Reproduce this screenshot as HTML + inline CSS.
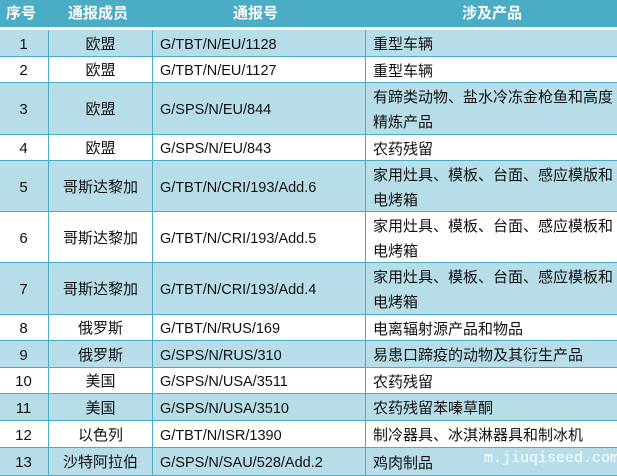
<!DOCTYPE html>
<html><head><meta charset="utf-8"><style>
*{margin:0;padding:0;box-sizing:border-box}
body{width:617px;height:476px;overflow:hidden;background:#fff;font-family:"Liberation Sans","Noto Sans CJK SC",sans-serif;font-size:14px;color:#111;position:relative}
.hd{position:absolute;left:0;top:0;width:617px;height:27px;background:#4BACC6;color:#fff;font-weight:bold;font-size:15px}
.hd div{position:absolute;top:0;line-height:27px}
.r{position:absolute;left:0;width:617px;border-bottom:1px solid #4BACC6}
.b{background:#B7DDE8}
.c{position:absolute;top:0;bottom:0;padding-top:3px;display:flex;align-items:center;line-height:20px}
.c1{left:0;width:47px;justify-content:center;font-size:15px}
.c2{left:48px;width:104px;justify-content:center;border-left:1px solid #4BACC6;font-size:15px}
.c3{left:152px;width:213px;padding-left:7px;border-left:1px solid #4BACC6;font-size:14.5px}
.c4{left:365px;width:252px;padding-left:7px;border-left:1px solid #4BACC6;line-height:25px;font-size:15px}
.wm{position:absolute;right:-2px;top:450px;color:#fff;font-family:"Liberation Mono",monospace;font-size:15px}
</style></head><body>
<div class="hd"><div style="left:6px">序号</div><div style="left:68px">通报成员</div><div style="left:233px">通报号</div><div style="left:462px">涉及产品</div></div>
<div class="r b" style="top:30px;height:27px"><div class="c c1">1</div><div class="c c2">欧盟</div><div class="c c3">G/TBT/N/EU/1128</div><div class="c c4">重型车辆</div></div>
<div class="r" style="top:57px;height:26px"><div class="c c1">2</div><div class="c c2">欧盟</div><div class="c c3">G/TBT/N/EU/1127</div><div class="c c4">重型车辆</div></div>
<div class="r b" style="top:83px;height:52px"><div class="c c1">3</div><div class="c c2">欧盟</div><div class="c c3">G/SPS/N/EU/844</div><div class="c c4">有蹄类动物、盐水冷冻金枪鱼和高度<br>精炼产品</div></div>
<div class="r" style="top:135px;height:26px"><div class="c c1">4</div><div class="c c2">欧盟</div><div class="c c3">G/SPS/N/EU/843</div><div class="c c4">农药残留</div></div>
<div class="r b" style="top:161px;height:51px"><div class="c c1">5</div><div class="c c2">哥斯达黎加</div><div class="c c3">G/TBT/N/CRI/193/Add.6</div><div class="c c4">家用灶具、模板、台面、感应模版和<br>电烤箱</div></div>
<div class="r" style="top:212px;height:51px"><div class="c c1">6</div><div class="c c2">哥斯达黎加</div><div class="c c3">G/TBT/N/CRI/193/Add.5</div><div class="c c4">家用灶具、模板、台面、感应模板和<br>电烤箱</div></div>
<div class="r b" style="top:263px;height:52px"><div class="c c1">7</div><div class="c c2">哥斯达黎加</div><div class="c c3">G/TBT/N/CRI/193/Add.4</div><div class="c c4">家用灶具、模板、台面、感应模板和<br>电烤箱</div></div>
<div class="r" style="top:315px;height:26px"><div class="c c1">8</div><div class="c c2">俄罗斯</div><div class="c c3">G/TBT/N/RUS/169</div><div class="c c4">电离辐射源产品和物品</div></div>
<div class="r b" style="top:341px;height:27px"><div class="c c1">9</div><div class="c c2">俄罗斯</div><div class="c c3">G/SPS/N/RUS/310</div><div class="c c4">易患口蹄疫的动物及其衍生产品</div></div>
<div class="r" style="top:368px;height:26px"><div class="c c1">10</div><div class="c c2">美国</div><div class="c c3">G/SPS/N/USA/3511</div><div class="c c4">农药残留</div></div>
<div class="r b" style="top:394px;height:27px"><div class="c c1">11</div><div class="c c2">美国</div><div class="c c3">G/SPS/N/USA/3510</div><div class="c c4">农药残留苯嗪草酮</div></div>
<div class="r" style="top:421px;height:27px"><div class="c c1">12</div><div class="c c2">以色列</div><div class="c c3">G/TBT/N/ISR/1390</div><div class="c c4">制冷器具、冰淇淋器具和制冰机</div></div>
<div class="r b" style="top:448px;height:28px"><div class="c c1">13</div><div class="c c2">沙特阿拉伯</div><div class="c c3">G/SPS/N/SAU/528/Add.2</div><div class="c c4">鸡肉制品</div></div>
<div class="wm">m.jiuqiseed.com</div>
</body></html>
